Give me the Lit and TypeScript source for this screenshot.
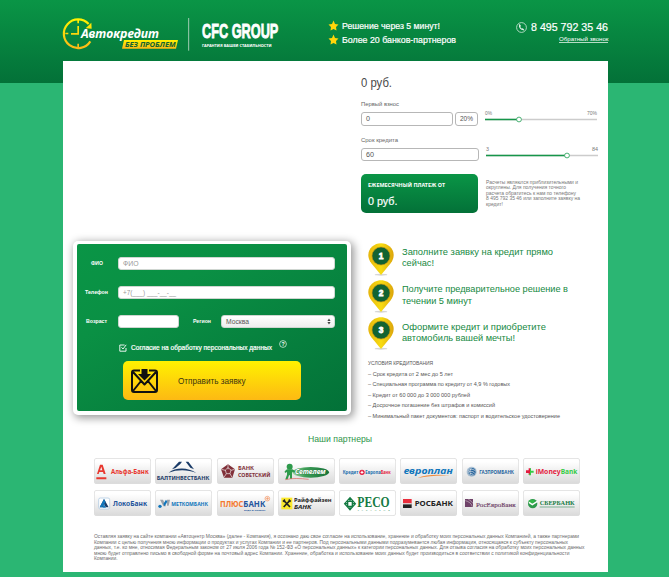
import { LitElement, html, svg, css } from "lit";
import { customElement } from "lit/decorators.js";

// One line of text set to an exact measure.
const line = (text: string, width: number, size: number, height: number, cls = "") => html`
  <svg class="line ${cls}" width=${width} height=${height}>
    <text x="0" y=${height / 2 + size * 0.36} font-size=${size} textLength=${width} lengthAdjust="spacingAndGlyphs">${text}</text>
  </svg>`;

// Text inside a logo drawing.
const word = (text: string, x: number, y: number, width: number, size: number, cls: string) =>
  svg`<text class=${cls} x=${x} y=${y} font-size=${size} textLength=${width} lengthAdjust="spacingAndGlyphs">${text}</text>`;

const partners = [
  svg`<path class="f-red" d="M9 48 18 20H26L35 48H29L27 42H16L14 48ZM18 37H25L22 26ZM7 58H37V64H7Z"/>
    ${word("Альфа-Банк", 51, 48, 113, 19, "noto b f-red")}`,
  svg`<path class="f-navy" d="M41 44C62 27 99 27 124 45C98 34 67 34 41 44ZM51 34 72 11H81L76 18 62 30ZM92 11H100L117 34 106 29Z"/>
    ${word("БАЛТИНВЕСТБАНК", 5, 65, 158, 17, "noto b f-navy")}`,
  svg`<path class="f-wine" d="M33 19 54 34 46 59H21L12 34Z"/>
    <path class="l-pale" d="M33 20V34M53 34 42 37M45 58 39 47M21 58 28 47M13 34 25 37M33 29 42 36 39 47H28L25 36Z"/>
    ${word("БАНК", 63, 36, 48, 15, "noto b f-wine")}${word("СОВЕТСКИЙ", 63, 57, 97, 15, "noto b f-wine")}`,
  svg`<ellipse cx="98" cy="43" rx="55" ry="16" fill="url(#oval)"/>
    <circle class="f-leaf" cx="35" cy="26" r="9"/>
    <path class="f-leaf" d="M27 34H43L52 39 49 44 42 41V62H36V52H33L29 64H22L27 50V42L21 45 20 40Z"/>
    <path class="l-red" d="M22 65C42 60 66 61 92 64"/>
    ${word("Сетелем", 51, 49, 92, 20, "noto b i f-white outlined")}`,
  svg`${word("Кредит", 11, 48, 47, 14, "noto b f-blue")}
    <circle class="f-crimson" cx="69" cy="43" r="8"/><path class="f-white" d="M69 37 71 41 75 43 71 45 69 49 67 45 63 43 67 41Z"/>
    ${word("Европа", 79, 48, 46, 14, "noto b f-blue")}${word("Банк", 125, 48, 30, 14, "noto b f-crimson")}`,
  svg`${word("европлан", 11, 47, 147, 28, "noto b i f-azure")}
    <path class="f-orange" d="M53 60C78 50 111 48 152 53C115 51 84 54 53 60Z"/>`,
  svg`<circle class="f-steel" cx="29" cy="41" r="15" opacity=".35"/><circle class="f-steel" cx="30" cy="41" r="11"/>
    <path class="l-pale" d="M19 38C26 31 35 34 41 39M18 43C27 37 36 41 39 47M22 49C28 44 32 46 34 51M28 30C22 38 23 45 28 52"/>
    ${word("ГАЗПРОМБАНК", 52, 48, 104, 17, "noto b f-steel")}`,
  svg`<path class="f-crimson" d="M17 31H23V51H17V45H9V37H17Z"/><path class="f-lime" d="M21 31H24V38H32V44H24V52H18V47H21Z"/>
    ${word("iMoney", 38, 49, 75, 19, "noto b f-crimson")}${word("Bank", 113, 49, 50, 19, "noto b f-lime")}`,
  svg`<rect class="f-white l-sky" x="14" y="24" width="33" height="33" rx="5"/>
    <path class="f-navy" d="M30 27 44 52H35L30 42 26 52H17Z"/><path class="f-azure" d="M30 27 35 36 24 52H17ZM30 43 36 53H25Z"/>
    ${word("ЛокоБанк", 57, 48, 102, 21, "noto b f-royal")}`,
  svg`<path class="f-grey" d="M15 29H24L33 49H25ZM36 29H45L41 47H36Z"/><path class="f-azure" d="M25 42 33 29 37 35 29 49Z"/><circle class="f-azure" cx="15" cy="49" r="5"/>
    ${word("МЕТКОМБАНК", 49, 49, 110, 16, "noto b f-azure")}`,
  svg`${word("ПЛЮС", 9, 50, 70, 25, "noto b f-tangerine")}${word("БАНК", 79, 50, 66, 25, "noto b f-royal")}
    <circle class="l-tangerine" cx="151" cy="26" r="7"/><path class="l-tangerine" d="M151 21V31M146 26H156"/>
    ${word("БУДЬ В ПЛЮСЕ!", 81, 64, 64, 7, "noto b f-royal")}`,
  svg`<rect class="f-yellow" x="10" y="23" width="33" height="35"/>
    <path class="l-x" d="M17 31 36 51M36 31 17 51M15 35 21 29M32 29 38 35"/>
    ${word("Райффайзен", 48, 37, 113, 15, "noto b f-black")}${word("БАНК", 48, 58, 52, 15, "noto b i f-black")}`,
  svg`<path class="l-forest" d="M33 23 49 41 33 59 17 41ZM26 34H40V49H26ZM33 25V33M33 49V58M17 41H26M40 41H49"/>
    ${word("РЕСО", 55, 52, 97, 44, "serif b f-forest")}
    <text class="noto f-forest" x="56" y="64" font-size="7" textLength="96">ГАРАНТИЯ</text>`,
  svg`<path class="f-signal" d="M9 27H35V41H9Z"/><path class="f-black" d="M9 41H35V54H9Z"/><path class="f-white" d="M9 40H35V43H9Z"/>
    ${word("РОСБАНК", 44, 49, 115, 19, "noto b f-black")}`,
  svg`<rect class="f-plum" x="9" y="27" width="24" height="24"/><path class="l-pale thin" d="M10 32C20 34 29 41 31 50M19 28C25 31 31 36 32 40"/>
    ${word("РосЕвроБанк", 42, 51, 119, 21, "serif f-plum outline-plum")}`,
  svg`<circle class="f-leaf" cx="29" cy="41" r="14"/><ellipse class="f-lime" cx="26" cy="34" rx="9" ry="5" opacity=".6"/>
    <path class="l-sber" d="M18 37 28 44 43 34"/>
    ${word("СБЕРБАНК", 50, 46, 105, 21, "serif b f-forest")}<path class="f-forest" d="M50 50H155V52H50Z"/>`,
];

const steps: [string, number][][] = [
  [["Заполните заявку на кредит прямо", 151], ["сейчас!", 32]],
  [["Получите предварительное решение в", 166], ["течении 5 минут", 70]],
  [["Оформите кредит и приобретите", 144], ["автомобиль вашей мечты!", 113]],
];

const terms: [string, number][] = [
  ["УСЛОВИЯ КРЕДИТОВАНИЯ", 65],
  ["– Срок кредита от 2 мес до 5 лет", 85],
  ["– Специальная программа по кредиту от 4,9 % годовых", 142],
  ["– Кредит от 60 000 до 3 000 000 рублей", 102],
  ["– Досрочное погашение без штрафов и комиссий", 127],
  ["– Минимальный пакет документов: паспорт и водительское удостоверение", 192],
];

const note: [string, number][] = [
  ["Расчеты являются приблизительными и", 92],
  ["округлены. Для получения точного", 80],
  ["расчета обратитесь к нам по телефону", 90],
  ["8 495 792 35 46 или заполните заявку на", 94],
  ["кредит!", 17],
];

const legal: [string, number][] = [
  ["Оставляя заявку на сайте компании «Автоцентр Москва» (далее - Компания), я осознано даю свое согласие на использование, хранение и обработку моих персональных данных Компанией, а также партнерами", 485],
  ["Компании с целью получения мною информации о продуктах и услугах Компании и ее партнеров. Под персональными данными подразумевается любая информация, относящаяся к субъекту персональных", 474],
  ["данных, т.е. ко мне, относимая Федеральным законом от 27 июля 2006 года № 152-ФЗ «О персональных данных» к категории персональных данных. Для отзыва согласия на обработку моих персональных данных", 490.5],
  ["мною будет отправлено письмо в свободной форме на почтовый адрес Компании. Хранение, обработка и использование моих данных будет производиться в соответствии с политикой конфиденциальности", 475.5],
  ["Компании.", 23.5],
];

@customElement("app-root")
export class AppRoot extends LitElement {
  static styles = css`
    :host {
      display: block; box-sizing: border-box; height: 577px; padding: 0 61px 0 63px; overflow: hidden;
      background: linear-gradient(#0a9546, #037138) 0 0 / 100% 83px no-repeat, #2bb673;
      font-family: "Liberation Sans", Arial, sans-serif; color: #555;
    }
    * { box-sizing: border-box; }
    svg { display: block; overflow: visible; flex: none; }
    .line { fill: currentColor; }
    .noto { font-family: "Noto Sans", "Open Sans", sans-serif; }
    .sans { font-family: "Liberation Sans", sans-serif; }
    .serif { font-family: "Liberation Serif", serif; }
    .b { font-weight: 700; }
    .i { font-style: italic; }

    header { height: 61px; display: flex; align-items: flex-start; color: #fff; padding-top: 17px; }
    .perks { margin-left: 48px; padding-top: 2px; display: grid; gap: 1px; }
    .perk { display: flex; align-items: center; gap: 3px; height: 13px; }
    .star { fill: #ffd60a; }
    .contact { margin-left: auto; display: flex; flex-direction: column; align-items: flex-end; padding-top: 3px; }
    .phone { display: flex; gap: 4px; align-items: center; height: 14px; }
    .callback { border-bottom: 1px solid #b6dcc5; margin-top: 1px; height: 8px; }
    .ring { fill: none; stroke: #d3ebdc; stroke-width: .8; }
    .handset { fill: none; stroke: #e4f4ea; stroke-width: 1.1; stroke-linecap: round; }
    .firm { stroke: currentColor; stroke-width: .2; }

    main { background: #fff; height: 511px; }
    .calc { margin-left: 298px; width: 240px; height: 180px; padding-top: 15px; }
    .total { color: #4a4a4a; height: 14px; }
    .caption { margin-top: 10px; height: 8px; color: #666; }
    .row { display: flex; height: 14px; margin-top: 4px; }
    .row + .caption { margin-top: 9.5px; }
    .box { height: 13.5px; border: 1px solid #b7b7b7; border-radius: 3px; background: #fff; padding-left: 4px; color: #555; display: flex; align-items: center; }
    .w-pay { width: 92px; } .w-pct { width: 23px; margin-left: 2px; } .w-term { width: 118px; }
    .slider { margin-left: 7px; width: 112px; color: #777; margin-top: -2px; }
    .ends { display: flex; justify-content: space-between; height: 7px; }
    .track { fill: none; stroke: #ccc; stroke-width: 1.3; }
    .track.on { stroke: #16964a; }
    .pay-row { display: flex; margin-top: 12px; gap: 8px; }
    .pay { width: 117px; height: 39px; border-radius: 5px; background: linear-gradient(#0a9546, #037138); color: #fff; padding: 7px 0 0 7px; display: grid; align-content: start; gap: 4px; }
    .note { padding-top: 5px; color: #777; }

    .mid { display: flex; height: 192px; }
    .panel { margin-left: 10px; width: 278px; height: 174px; background: #fff; border-radius: 5px; padding: 3px 4px 4px 3.5px; box-shadow: 2px 2px 8px 1px #0006; }
    .form { height: 167px; background: linear-gradient(150deg, #0a9546, #0a9044 30%, #037138); border-radius: 2px; padding-top: 13px; color: #fff; }
    .field { display: flex; align-items: center; height: 12.5px; margin-bottom: 16.5px; }
    .lab { width: 41.5px; display: flex; justify-content: center; padding-right: 1px; }
    .lab-left { width: 42px; padding-left: 14px; }
    .in { height: 12.5px; background: #fff; border-radius: 3px; border: 1px solid #cfd6d1; color: #999; padding-left: 3.5px; display: flex; align-items: center; }
    .w-full { width: 217px; } .w-age { width: 60.5px; }
    .select { width: 114px; background: linear-gradient(#fff, #eee); color: #555; justify-content: space-between; padding: 0 3px 0 4px; }
    .arrows { fill: #444; }
    .agree { display: flex; align-items: center; gap: 4px; margin-left: 42.5px; height: 9px; margin-top: -1px; }
    .tick { fill: none; stroke: #fff; stroke-width: .9; }
    .help { margin: -8px 0 0 3px; }
    .send { display: flex; align-items: center; margin: 9px 0 0 46.5px; width: 178px; height: 39px; border-radius: 5px; background: linear-gradient(#fff200, #fdb913); color: #3b3410; padding-left: 8px; gap: 20px; }
    .mail { fill: none; stroke: #111; stroke-width: 2; stroke-linejoin: round; }
    .arrow { fill: #111; }

    .info { margin-left: 17px; padding-top: 1.5px; }
    .step { display: flex; gap: 8px; height: 37.3px; color: #16893f; }
    .step-text { padding-top: 3.5px; }
    .terms { padding-top: 4px; color: #555; }
    .partners { padding: 0 31px; }
    .head { display: flex; margin-left: 214px; color: #2d9549; height: 25px; }
    .grid { display: grid; grid-template-columns: repeat(8, 57px); justify-content: space-between; row-gap: 6px; width: 486px; }
    .card { height: 26px; border-radius: 3px; background: linear-gradient(#fff 15%, #d9d9d9); box-shadow: inset 0 0 0 .7px #ddd; }
    .card.plain { background: #fff; }
    .legal { padding: 17px 0 0 31px; color: #6a6a6a; }

    .f-red { fill: #e8382f; } .f-navy { fill: #1b3c68; } .f-wine { fill: #803039; } .f-white { fill: #fff; }
    .f-leaf { fill: #2e9a4b; } .f-blue { fill: #2470ae; } .f-crimson { fill: #e31b3e; } .f-azure { fill: #1176bc; }
    .f-orange { fill: #f08a3c; } .f-steel { fill: #25649c; } .f-lime { fill: #35cb45; } .f-royal { fill: #24559c; }
    .f-grey { fill: #9ba3ab; } .f-tangerine { fill: #f5782d; } .f-yellow { fill: #fbe92c; } .f-black { fill: #222; }
    .f-forest { fill: #147a42; } .f-signal { fill: #e92e3c; } .f-plum { fill: #6f4268; }
    .l-pale { fill: none; stroke: #f0eeee; stroke-width: 2; }
    .l-pale.thin { stroke-width: 1.4; }
    .l-red { fill: none; stroke: #dc5a56; stroke-width: 2; }
    .l-sky { stroke: #a5c3df; stroke-width: 2; }
    .l-tangerine { fill: none; stroke: #f5905a; stroke-width: 2; }
    .l-x { fill: none; stroke: #222; stroke-width: 5; }
    .l-forest { fill: none; stroke: #147a42; stroke-width: 4; }
    .l-sber { fill: none; stroke: #fff; stroke-width: 4; }
    .outlined { stroke: #287a43; stroke-width: 2; paint-order: stroke; }
    .outline-plum { stroke: #6f4268; stroke-width: .5; }
    .gold-line { fill: none; stroke: url(#gold); stroke-width: 6.5; }
    .gold { fill: url(#gold); }
    .heavy { stroke: #fff; stroke-width: 2.5; }
    .rule { stroke: #9fcdb2; stroke-width: 3; }
    .ink { fill: #126332; }
  `;

  private brand() {
    return html`<svg width="217" height="34" viewBox="39 51 651 102">
      <defs><linearGradient id="gold" x1="0" y1="0" x2="0" y2="1"><stop offset="0" stop-color="#fff200"/><stop offset="1" stop-color="#fbb917"/></linearGradient></defs>
      <path class="gold-line" d="M116 72A43 43 0 1 0 121 124"/>
      <path class="gold" d="M124 68 125 86 107 85ZM82 60H87V70H82ZM82 131H87V141H82ZM46 98H55V103H46ZM82 78H87V104H63V99H82Z"/>
      ${word("Автокредит", 93, 113, 234, 37, "noto b i f-white")}
      <path class="gold" d="M222 120H384L378 146H216Z"/>
      ${word("БЕЗ ПРОБЛЕМ", 225, 141, 152, 21, "noto b i ink")}
      <path class="rule" d="M416 54V152"/>
      ${word("CFC GROUP", 456, 114, 229, 62, "sans b f-white heavy")}
      ${word("ГАРАНТИЯ ВАШЕЙ СТАБИЛЬНОСТИ", 456, 140, 209, 12, "noto b f-white")}
    </svg>`;
  }

  private perk(text: string, width: number) {
    return html`<div class="perk">
      <svg class="star" width="11" height="11" viewBox="0 0 22 22"><path d="M11 1 14 8 21 9 16 14 17 21 11 18 5 21 6 14 1 9 8 8Z"/></svg>
      ${line(text, width, 9, 12, "firm")}</div>`;
  }

  private slider(a: string, aw: number, b: string, bw: number, at: number) {
    return html`<div class="slider"><div class="ends">${line(a, aw, 5, 7)}${line(b, bw, 5, 7)}</div>
      <svg width="112" height="5"><path class="track" d="M0 2.5H112"/><path class="track on" d="M0 2.5H${at}"/>
      <circle cx=${at} cy="2.5" r="2.4" fill="#fff" stroke="#35a864" stroke-width=".9"/></svg></div>`;
  }

  private pin(n: number) {
    return html`<svg width="26" height="33" viewBox="0 0 78 99">
      <defs><linearGradient id="pin" x1="0" x2="1"><stop offset="0" stop-color="#e5b50c"/><stop offset=".5" stop-color="#f8dc12"/><stop offset="1" stop-color="#dca50b"/></linearGradient></defs>
      <ellipse cx="39" cy="95" rx="19" ry="3" fill="#bbb" opacity=".6"/>
      <path d="M39 96 10 61C-13 29 12 1 39 1S91 29 68 61Z" fill="url(#pin)"/>
      <circle cx="39" cy="39" r="27" class="ink" stroke="#b98d13" stroke-width="2"/>
      ${word(String(n), 32, 49, 14, 29, "sans b f-white heavy")}
    </svg>`;
  }

  render() {
    return html`
      <header>
        ${this.brand()}
        <div class="perks">${this.perk("Решение через 5 минут!", 98)}${this.perk("Более 20 банков-партнеров", 114)}</div>
        <div class="contact">
          <div class="phone">
            <svg width="11" height="11" viewBox="0 0 11 11"><circle class="ring" cx="5.5" cy="5.5" r="4.9"/><path class="handset" d="M3.6 2.8C2.9 5.1 5 7.9 7.6 7.8M3.6 2.8 4.4 4M7.6 7.8 6.6 6.8"/></svg>
            ${line("8 495 792 35 46", 77, 10.8, 14, "firm")}
          </div>
          <div class="callback">${line("Обратный звонок", 49.5, 6, 7)}</div>
        </div>
      </header>
      <main>
        <section class="calc">
          <div class="total">${line("0 руб.", 31, 12, 14)}</div>
          <div class="caption">${line("Первый взнос", 38, 6, 8)}</div>
          <div class="row">
            <div class="box w-pay">${line("0", 4, 7, 11)}</div>
            <div class="box w-pct">${line("20%", 13, 7, 11)}</div>
            ${this.slider("0%", 7, "70%", 10, 34)}
          </div>
          <div class="caption">${line("Срок кредита", 37, 6, 8)}</div>
          <div class="row">
            <div class="box w-term">${line("60", 8, 7, 11)}</div>
            ${this.slider("3", 3, "84", 6, 81)}
          </div>
          <div class="pay-row">
            <div class="pay">${line("ЕЖЕМЕСЯЧНЫЙ ПЛАТЕЖ ОТ", 77, 6, 8, "noto b")}${line("0 руб.", 29.5, 11.5, 16, "firm")}</div>
            <div class="note">${note.map(([t, w]) => line(t, w, 5.2, 5.6))}</div>
          </div>
        </section>
        <section class="mid">
          <div class="panel"><div class="form">
            <div class="field"><span class="lab">${line("ФИО", 12, 5.6, 8, "b")}</span><div class="in w-full">${line("ФИО", 15.5, 7, 10)}</div></div>
            <div class="field"><span class="lab">${line("Телефон", 23, 5.6, 8, "b")}</span><div class="in w-full">${line("+7(___) ___-__-__", 53, 7, 10)}</div></div>
            <div class="field"><span class="lab">${line("Возраст", 21, 5.6, 8, "b")}</span><div class="in w-age"></div>
              <span class="lab-left">${line("Регион", 18, 5.6, 8, "b")}</span>
              <div class="in select">${line("Москва", 23, 7, 10)}<svg class="arrows" width="4" height="7"><path d="M2 .5 3.6 3H.4ZM2 6.5 3.6 4H.4Z"/></svg></div></div>
            <div class="agree">
              <svg class="tick" width="8" height="8"><path d="M7 4V7.2H.8V1H5.6M2.5 3.3 4 5 7.2 .8"/></svg>
              ${line("Согласие на обработку персональных данных", 141, 6.8, 9, "firm")}
              <svg class="help" width="8" height="8"><circle class="ring" cx="4" cy="4" r="3.4"/>${word("?", 2.4, 6, 3.2, 5.6, "sans b f-white")}</svg>
            </div>
            <div class="send">
              <svg width="27" height="24" viewBox="0 0 27 24"><path class="mail" d="M9 1.5H3Q1 1.5 1 3.5V21Q1 23 3 23H24Q26 23 26 21V3.5Q26 1.5 24 1.5H18M2 3 13.5 15.5 25 3M2 22 10 12M25 22 17 12"/><path class="arrow" d="M10.5 0H16.5V5H20L13.5 11.5 7 5H10.5Z"/></svg>
              ${line("Отправить заявку", 67.5, 9.2, 12)}
            </div>
          </div></div>
          <div class="info">
            ${steps.map((s, i) => html`<div class="step">${this.pin(i + 1)}<div class="step-text">${s.map(([t, w]) => line(t, w, 9.5, 11.3))}</div></div>`)}
            <div class="terms">${terms.map(([t, w]) => line(t, w, 5.8, 10.5))}</div>
          </div>
        </section>
        <section class="partners">
          <div class="head">${line("Наши партнеры", 64, 9.6, 12)}</div>
          <div class="grid">${partners.map((p, i) => html`<div class="card ${i === 12 ? "plain" : ""}">
            <svg width="57" height="26" viewBox="0 0 171 78"><defs><linearGradient id="oval"><stop offset="0" stop-color="#a5d7a9"/><stop offset=".35" stop-color="#3d9e56"/><stop offset="1" stop-color="#17733a"/></linearGradient></defs>${p}</svg></div>`)}</div>
        </section>
        <footer class="legal">${legal.map(([t, w]) => line(t, w, 5.3, 5.55))}</footer>
      </main>`;
  }
}
